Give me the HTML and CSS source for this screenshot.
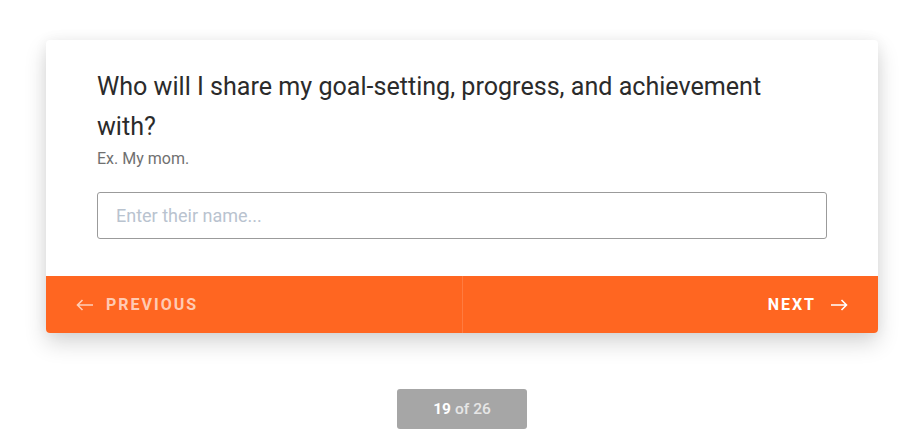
FILE: index.html
```html
<!DOCTYPE html>
<html>
<head>
<meta charset="utf-8">
<link rel="stylesheet" href="styles.css">
</head>
<body>
<div class="page">
  <div class="card">
    <div class="card-body">
      <h1 class="question">Who will I share my goal-setting, progress, and achievement with?</h1>
      <p class="hint">Ex. My mom.</p>
      <input class="answer" type="text" placeholder="Enter their name...">
    </div>
    <div class="card-footer">
      <button class="nav prev">
        <svg class="arrow" width="18" height="12" viewBox="0 0 18 12"><path d="M17 6H1.5M6.5 1L1.5 6l5 5" fill="none" stroke="currentColor" stroke-width="1.6"/></svg>
        <span>PREVIOUS</span>
      </button>
      <button class="nav next">
        <span>NEXT</span>
        <svg class="arrow" width="18" height="12" viewBox="0 0 18 12"><path d="M1 6h15.5M11.5 1l5 5-5 5" fill="none" stroke="currentColor" stroke-width="1.6"/></svg>
      </button>
    </div>
  </div>
  <div class="pager"><b>19</b> of 26</div>
</div>
</body>
</html>
```
FILE: styles.css
```css
* { box-sizing: border-box; }
html, body { margin: 0; padding: 0; background: #fff; }
body { font-family: Roboto, "Noto Sans", Arial, sans-serif; }
.page {
  display: flex;
  flex-direction: column;
  align-items: center;
  padding-top: 40px;
}
.card {
  width: 832px;
  background: #fff;
  border-radius: 4px;
  box-shadow: 0 10px 22px rgba(0,0,0,0.16), 0 0 14px rgba(0,0,0,0.05);
  overflow: hidden;
}
.card-body {
  padding: 27px 51px 37px 51px;
}
.question {
  margin: 0;
  max-width: 700px;
  font-size: 25.1px;
  font-weight: 400;
  line-height: 40px;
  color: #2b2b2b;
}
.hint {
  margin: 2px 0 0 0;
  font-size: 16px;
  line-height: 20px;
  color: #707070;
}
.answer {
  display: block;
  width: 100%;
  height: 47px;
  margin-top: 23px;
  padding: 0 18px;
  border: 1px solid #9b9b9b;
  border-radius: 3px;
  font-family: inherit;
  font-size: 18px;
  color: #333;
  outline: none;
}
.answer::placeholder { color: #b9c3cf; }
.card-footer {
  display: flex;
  height: 57px;
  background: #ff6621;
}
.nav {
  flex: 1;
  display: flex;
  align-items: center;
  gap: 12px;
  border: 0;
  background: transparent;
  font-family: inherit;
  font-size: 16px;
  font-weight: 700;
  letter-spacing: 2px;
  padding: 0 30px;
  cursor: pointer;
}
.prev {
  color: rgba(255,255,255,0.68);
  justify-content: flex-start;
  border-right: 1px solid rgba(255,255,255,0.14);
}
.next {
  color: #fff;
  justify-content: flex-end;
}
.next span { margin-right: 2px; }
.arrow { display: block; }
.pager {
  margin-top: 56px;
  width: 130px;
  height: 40px;
  border-radius: 3px;
  background: #a6a6a6;
  color: #e6e6e6;
  font-size: 15.5px;
  font-weight: 500;
  display: flex;
  align-items: center;
  justify-content: center;
  gap: 4px;
}
.pager b { color: #fff; font-weight: 700; }
```
